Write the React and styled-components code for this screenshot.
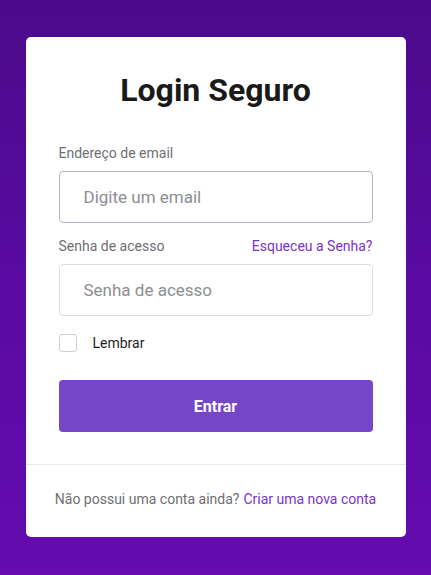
import styled, { createGlobalStyle } from "styled-components";

const GlobalStyle = createGlobalStyle`
    html, body { margin: 0; padding: 0; }
    body {
        font-family: Roboto, "Liberation Sans", sans-serif;
        background: linear-gradient(180deg, #4b0a8b 0%, #5a0aa2 50%, #650bb0 100%);
        min-height: 575px;
    }
`

const Page = styled.div`
    min-height: 575px;
    padding-top: 37px;
    box-sizing: border-box;
    display: flex;
    justify-content: center;
    align-items: flex-start;
`

const Card = styled.div`
    width: 380px;
    height: 500px;
    background: #ffffff;
    border-radius: 5px;
    display: flex;
    flex-direction: column;
`

const Body = styled.div`
    padding: 0 33px;
`

const Title = styled.h1`
    margin: 0;
    padding-top: 33px;
    text-align: center;
    font-size: 32px;
    font-weight: 700;
    color: #1a1a1a;
    line-height: 40px;
`

const LabelRow = styled.div`
    display: flex;
    justify-content: space-between;
    align-items: center;
    margin-top: ${props => props.top || "0px"};
    margin-bottom: 9px;
    height: 18px;
`

const Label = styled.label`
    font-size: 14px;
    color: #6f6f73;
`

const LinkText = styled.a`
    font-size: 14px;
    color: #7a33cc;
    text-decoration: none;
`

const Input = styled.input`
    display: block;
    width: 100%;
    box-sizing: border-box;
    height: 52px;
    padding: 0 24px;
    font-family: Roboto, "Liberation Sans", sans-serif;
    font-size: 17px;
    color: #333;
    border: 1px solid ${props => (props.focused ? "#b7b3c6" : "#dcdcdf")};
    border-radius: 4px;
    outline: none;
    &::placeholder { color: #8e8e93; }
`

const CheckRow = styled.label`
    display: flex;
    align-items: center;
    gap: 16px;
    margin-top: 18px;
    font-size: 14px;
    color: #1e1e1e;
`

const Box = styled.span`
    width: 16px;
    height: 16px;
    border: 1px solid #cfcfd4;
    border-radius: 3px;
    background: #fff;
`

const Button = styled.button`
    display: block;
    width: 100%;
    height: 52px;
    margin-top: 28px;
    border: 0;
    border-radius: 4px;
    background: #7646c8;
    color: #fff;
    font-family: Roboto, "Liberation Sans", sans-serif;
    font-size: 16px;
    font-weight: 700;
`

const Footer = styled.div`
    margin-top: 32px;
    border-top: 1px solid #e9e9ec;
    flex: 1;
    display: flex;
    align-items: center;
    justify-content: center;
    padding-bottom: 4px;
    font-size: 14px;
    color: #6f6f73;
    a { color: #7a33cc; text-decoration: none; margin-left: 4px; }
`

export default function App() {
    return (
        <>
            <GlobalStyle />
            <Page>
                <Card>
                    <Title>Login Seguro</Title>
                    <Body>
                        <LabelRow top="34px">
                            <Label>Endereço de email</Label>
                        </LabelRow>
                        <Input focused placeholder="Digite um email" />
                        <LabelRow top="14px">
                            <Label>Senha de acesso</Label>
                            <LinkText href="#">Esqueceu a Senha?</LinkText>
                        </LabelRow>
                        <Input type="password" placeholder="Senha de acesso" />
                        <CheckRow>
                            <Box />
                            Lembrar
                        </CheckRow>
                        <Button>Entrar</Button>
                    </Body>
                    <Footer>
                        Não possui uma conta ainda?<a href="#">Criar uma nova conta</a>
                    </Footer>
                </Card>
            </Page>
        </>
    )
}
